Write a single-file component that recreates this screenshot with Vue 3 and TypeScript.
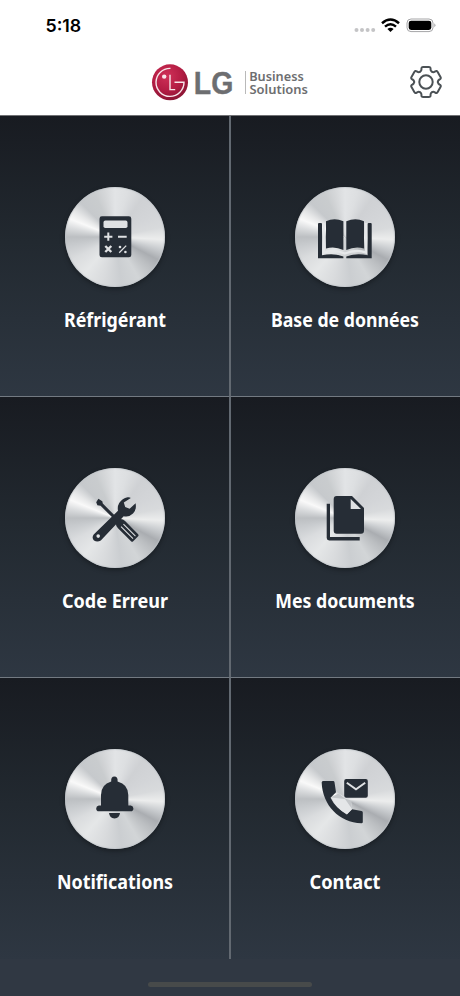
<script setup lang="ts">
type IconName = 'calculator' | 'book' | 'tools' | 'documents' | 'bell' | 'contact'

interface Tile {
  label: string
  icon: IconName
  width: number
}

const tiles: Tile[] = [
  { label: 'Réfrigérant', icon: 'calculator', width: 102 },
  { label: 'Base de données', icon: 'book', width: 148 },
  { label: 'Code Erreur', icon: 'tools', width: 106 },
  { label: 'Mes documents', icon: 'documents', width: 139.5 },
  { label: 'Notifications', icon: 'bell', width: 116 },
  { label: 'Contact', icon: 'contact', width: 71 },
]

// Outline of the six-toothed settings gear, centred on 0,0. Each corner is
// rounded by a curve that starts and ends a short way along its two edges.
function gearOutline(): string {
  const corners: [number, number][] = [[-22, 11.9], [-17, 15.8], [17, 15.8], [22, 11.9]]
  const points: [number, number][] = []
  for (let tooth = 0; tooth < 6; tooth++) {
    for (const [offset, radius] of corners) {
      const angle = ((tooth * 60 + offset - 90) * Math.PI) / 180
      points.push([Math.cos(angle) * radius, Math.sin(angle) * radius])
    }
  }
  const toward = (a: [number, number], b: [number, number]): string => {
    const step = 1.8 / Math.hypot(b[0] - a[0], b[1] - a[1])
    return `${(a[0] + (b[0] - a[0]) * step).toFixed(2)} ${(a[1] + (b[1] - a[1]) * step).toFixed(2)}`
  }
  const parts = points.map((point, i) => {
    const before = points[(i + points.length - 1) % points.length]
    const after = points[(i + 1) % points.length]
    return `${i ? 'L' : 'M'}${toward(point, before)}Q${point[0].toFixed(2)} ${point[1].toFixed(2)} ${toward(point, after)}`
  })
  return parts.join('') + 'Z'
}
const gear = gearOutline()
</script>

<template>
  <div class="screen">
    <header class="header">
      <div class="status">
        <span class="time">5:18</span>
        <svg class="indicators" width="84" height="18" viewBox="0 0 84 18">
          <g fill="#c4c4c6">
            <circle cx="4.5" cy="13" r="2" /><circle cx="10" cy="13" r="2" />
            <circle cx="15.6" cy="13" r="2" /><circle cx="21.2" cy="13" r="2" />
          </g>
          <g fill="none" stroke="#000" stroke-width="2.5">
            <path d="M30 6.2Q38.5-1.2 47 6.2" />
            <path d="M33 9.6Q38.5 5 44 9.6" />
          </g>
          <path d="M35.4 11.9Q38.5 9.6 41.6 11.9L38.5 15Z" />
          <rect x="55" y="2" width="26" height="12.6" rx="4" fill="#fff" stroke="#a5a5a7" />
          <rect x="56.7" y="3.7" width="22.6" height="9.3" rx="2.4" />
          <path d="M82.3 6.3Q84.6 8.3 82.3 10.3Z" fill="#a5a5a7" />
        </svg>
      </div>
      <div class="brand">
        <svg width="160" height="40" viewBox="0 0 160 40">
          <defs>
            <radialGradient id="emblem" cx="42%" cy="32%" r="72%">
              <stop offset="0" stop-color="#cf3158" />
              <stop offset=".55" stop-color="#b51d44" />
              <stop offset="1" stop-color="#861432" />
            </radialGradient>
          </defs>
          <circle cx="20" cy="20.3" r="18" fill="url(#emblem)" />
          <g fill="none" stroke="#f7e6ea" stroke-width="1.4">
            <path d="M20.5 6.4A14 14 0 1 0 34 20.3H24.5" />
            <path d="M20 12.8V27.6H25.2" />
          </g>
          <circle cx="14.2" cy="14.6" r="2.2" fill="#f7e6ea" />
          <text class="lg" x="43.8" y="31.7" textLength="39.5" lengthAdjust="spacingAndGlyphs">LG</text>
          <path d="M95.5 9V32" stroke="#b9b9b9" />
          <text class="tagline"><tspan x="99.2" y="18.8" textLength="54.5" lengthAdjust="spacingAndGlyphs">Business</tspan><tspan x="99.4" y="32" textLength="58.5" lengthAdjust="spacingAndGlyphs">Solutions</tspan></text>
        </svg>
        <button class="settings" aria-label="Paramètres">
          <svg width="36" height="36" viewBox="-18 -18 36 36" fill="none" stroke="#4b5155" stroke-width="2" stroke-linejoin="round">
            <path :d="gear" />
            <circle r="6.7" />
          </svg>
        </button>
      </div>
    </header>

    <main class="grid">
      <section v-for="tile in tiles" :key="tile.icon" class="tile">
        <div class="disc">
          <svg class="icon" viewBox="0 0 100 100">
            <g v-if="tile.icon === 'calculator'">
              <rect x="34.5" y="29.3" width="31.8" height="41" rx="2.4" />
              <rect class="light" x="38.5" y="33.6" width="24" height="7.4" rx="1.8" />
              <path class="cut" d="M39.2 49.7H47.4M43.3 45.6V53.8M53 49.7H61.7" stroke-width="2" />
              <path class="cut" d="M40.3 59L46.3 65M46.3 59L40.3 65" stroke-width="2.4" />
              <path class="cut" d="M54.2 65.8L61.2 58.6" stroke-width="1.3" />
              <circle class="light" cx="55" cy="60" r="1.3" /><circle class="light" cx="60.4" cy="65" r="1.3" />
            </g>
            <g v-else-if="tile.icon === 'book'">
              <path class="halo" d="M28.7 36V65.5Q39 62 49.8 66.5Q61 62 71 65.5V36" />
              <path d="M31 34.3Q39.5 30 48.4 34.3V63Q39.5 58.7 31 61.5ZM51.3 34.3Q60.5 30 69 34.3V61.5Q60.5 58.7 51.3 63Z" />
              <path d="M23 37Q23 36 24 36H26Q27 36 27 37V68.3Q38 65.5 48.4 69.4V71.2H23ZM76.7 37Q76.7 36 75.7 36H73.7Q72.7 36 72.7 37V68.3Q61.7 65.5 51.3 69.4V71.2H76.7Z" />
            </g>
            <g v-else-if="tile.icon === 'tools'">
              <path d="M31.2 34.2L33.4 30.7L37.3 33.2L37.8 35.6L54 51.8L51.8 53.8L35.6 37.8L32.4 37.2Z" />
              <g transform="translate(54.4 54.5) rotate(45)">
                <path d="M-2-3Q0-5.2 3-5H21.5Q23-5 23-3.5V3.5Q23 5 21.5 5H3Q0 5.2-2 3Z" />
                <path class="cut" d="M4-1.7H21M4 1.7H21" stroke-width="1" />
              </g>
              <path fill-rule="evenodd" d="M62.6 29.3Q57.2 30.5 54.2 35Q52.2 38.4 53 42.8L28.7 66.5Q26.4 70.1 29 72.5Q32.2 74.5 35.8 72.5L58.7 48.2Q64 49.5 68 45.6Q71.8 41.8 70.6 35.2L64.6 40.8L60.2 39L58.8 34.6L65.8 30Q64.7 29 62.6 29.3ZM31.4 68.1a1.8 1.8 0 1 0 3.6 0a1.8 1.8 0 1 0-3.6 0Z" />
            </g>
            <g v-else-if="tile.icon === 'documents'">
              <path d="M41.7 28H57L69 40V62.7Q69 65.7 66 65.7H41.7Q38.7 65.7 38.7 62.7V31Q38.7 28 41.7 28Z" />
              <path class="light" d="M55.7 31V41H66Z" />
              <path d="M31.7 35.7H35V69H64.7V72.4H34.2Q31.7 72.4 31.7 70Z" />
            </g>
            <g v-else-if="tile.icon === 'bell'">
              <path d="M46.2 32.4Q45.8 27.4 49.4 27.4Q53 27.4 52.6 32.4Q63.3 35.3 63.3 46V56.4H65.8Q68.4 56.8 68.4 59.4Q68.4 62.2 65.8 62.2H33.8Q31.2 62.2 31.2 59.4Q31.2 56.8 33.8 56.4H36V46Q36 35.3 46.2 32.4Z" />
              <path d="M44 64H55Q54.4 69.4 49.5 69.4Q44.6 69.4 44 64Z" />
            </g>
            <g v-else>
              <path d="M28 32H38.2Q39.3 32 39.5 33.3L41 43.2L35.5 48.8Q40.5 59 51.8 65.4L57.2 60.2L66.5 62Q67.8 62.2 67.8 63.5V73Q67.8 74.3 66.5 74.3C44 73.7 27.4 56 26.7 33.5Q26.7 32 28 32Z" />
              <path class="shine" d="M36 48.5L43.5 44.5L56 51.5L57 60L52 65.3Q41 59 36 48.5Z" />
              <path class="facet" d="M43.5 44.5L50 49.5L56 51.5L57 60L50 50L36 48.5Z" />
              <rect x="49.2" y="30" width="23.6" height="18.8" rx="2" />
              <path class="cut" d="M51.8 33.8L61 40.3L70.2 33.8" stroke-width="2" />
            </g>
          </svg>
        </div>
        <svg class="label" width="200" height="28" viewBox="0 0 200 28">
          <text x="100" y="20" :textLength="tile.width" lengthAdjust="spacingAndGlyphs">{{ tile.label }}</text>
        </svg>
      </section>
    </main>

    <footer class="footer"><div class="home"></div></footer>
  </div>
</template>

<style>
body { margin: 0; }
</style>

<style scoped>
.screen {
  width: 460px;
  height: 996px;
  display: flex;
  flex-direction: column;
  overflow: hidden;
  background: #2f3843;
  font-family: "Noto Sans", sans-serif;
}
.header { height: 116px; box-sizing: border-box; background: #fff; border-bottom: 1px solid #707174; }
.status {
  height: 50px;
  box-sizing: border-box;
  padding: 15px 24px 0 45.5px;
  display: flex;
  justify-content: space-between;
}
.time { font: 600 17.8px/21px Inter, sans-serif; color: #000; }
.indicators { margin-top: 2px; }
.brand {
  height: 64px;
  display: grid;
  grid-template-columns: 1fr 160px 1fr;
  align-items: center;
}
.brand > svg { grid-column: 2; }
.lg { font-family: "Liberation Sans", sans-serif; font-size: 31.5px; font-weight: 700; fill: #6d6e70; stroke: #6d6e70; stroke-width: .4px; }
.tagline { font-size: 13.3px; font-weight: 600; fill: #6d6e70; }
.settings {
  justify-self: end;
  margin-right: 16px;
  padding: 0;
  border: 0;
  background: none;
  display: flex;
}
.grid { display: grid; grid-template-columns: 230px 230px; grid-template-rows: repeat(3, 281px); height: 843px; }
.tile {
  box-sizing: border-box;
  display: flex;
  flex-direction: column;
  align-items: center;
  padding-top: 71px;
  background: linear-gradient(#181b21, #222930 45%, #2e3742);
  border-bottom: 1px solid #737a82;
}
.tile:nth-child(odd) { border-right: 1px solid #626971; }
.tile:nth-child(even) { border-left: 1px solid #626971; padding-right: 1px; }
.tile:nth-child(n + 5) { border-bottom: 0; }
.disc {
  width: 100px;
  height: 100px;
  border-radius: 50%;
  box-shadow: 0 2px 5px rgba(0, 0, 0, .35), inset 0 0 1px 1px rgba(190, 195, 200, .6);
  background: conic-gradient(
    #e2e4e6 0deg, #dddfe1 15deg, #cfd1d4 35deg, #d3d5d8 60deg, #d8dadc 78deg,
    #eceded 93deg, #cbced1 105deg, #aaadb1 118deg, #bbbec1 130deg,
    #d2d5d7 150deg, #cbced1 172deg, #d9dbdd 195deg, #e5e7e8 220deg, #dadcde 242deg,
    #c9cccf 258deg, #bcbfc2 270deg, #d9dbdd 281deg, #f9f9f9 292deg, #e6e7e8 302deg,
    #c6c9cc 315deg, #c9ccce 335deg, #d6d8da 348deg, #e2e4e6 360deg
  );
}
.icon { display: block; width: 100px; height: 100px; fill: #262d36; }
.light { fill: #dfe1e3; }
.cut { fill: none; stroke: #dfe1e3; }
.halo { fill: none; stroke: #e6e8ea; stroke-width: 2.4; }
.shine { fill: #e4e6e8; }
.facet { fill: #c3c6c9; }
.label { display: block; margin-top: 20px; }
.label text { font-size: 19px; font-weight: 700; fill: #fff; text-anchor: middle; }
.footer { flex: 1; display: flex; justify-content: center; background: #303843; }
.home { width: 164px; height: 5px; margin-top: 22.5px; border-radius: 3px; background: #474a4a; }
</style>
